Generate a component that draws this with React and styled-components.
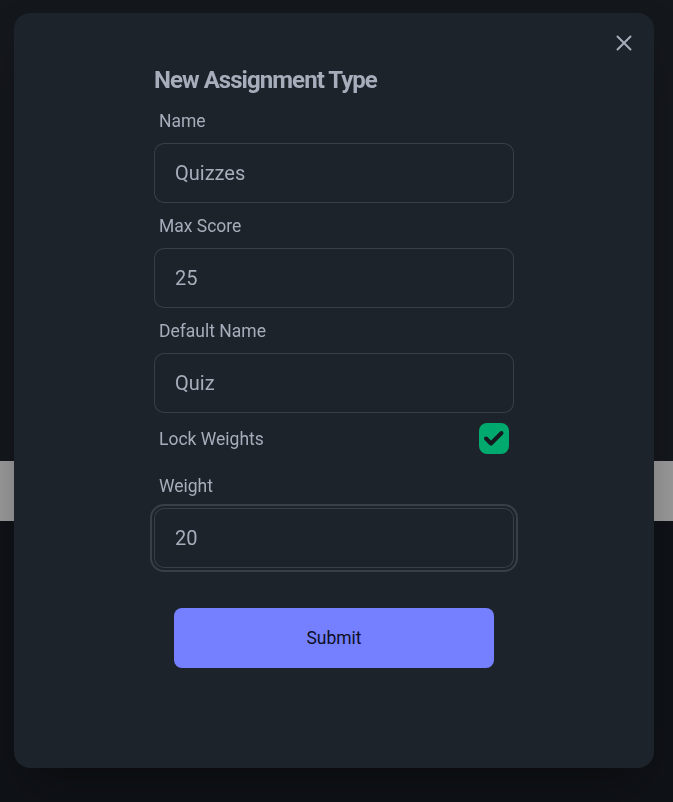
import React from "react";
import styled, { createGlobalStyle } from "styled-components";

const Global = createGlobalStyle`
  html, body { margin: 0; padding: 0; background: #0f1217; }
  body { font-family: Roboto, "Liberation Sans", sans-serif; }
  * { box-sizing: border-box; }
`;

const Page = styled.div`
  min-height: 100vh;
  display: flex;
  flex-direction: column;
`;

const Band = styled.div`
  height: ${(p) => p.$h}px;
  flex: ${(p) => (p.$grow ? 1 : "none")};
  background: ${(p) => p.$bg};
`;

const Overlay = styled.div`
  position: fixed;
  inset: 0;
  display: flex;
  justify-content: flex-start;
  align-items: flex-start;
  padding: 13px 0 0 14px;
`;

const Modal = styled.div`
  position: relative;
  width: 640px;
  height: 755px;
  background: #1d232a;
  border-radius: 16px;
  box-shadow: 0 25px 50px -12px rgba(0, 0, 0, 0.35);
  display: flex;
  justify-content: center;
  padding-top: 51px;
`;

const CloseButton = styled.button`
  position: absolute;
  top: 16px;
  right: 16px;
  width: 28px;
  height: 28px;
  border: none;
  background: transparent;
  padding: 0;
  display: flex;
  align-items: center;
  justify-content: center;
  cursor: pointer;
`;

const Form = styled.form`
  width: 360px;
  display: flex;
  flex-direction: column;
`;

const Title = styled.h3`
  margin: 0 0 2px;
  font-size: 24px;
  line-height: 32px;
  font-weight: 700;
  color: #a6adbb;
  letter-spacing: -0.95px;
`;

const Label = styled.label`
  display: block;
  padding: 11px 5px 10px;
  font-size: 17.5px;
  line-height: 24px;
  color: #a6adbb;
`;

const Input = styled.input`
  width: 100%;
  height: 60px;
  border: 1px solid rgba(166, 173, 187, 0.2);
  border-radius: 10px;
  background: #1d232a;
  color: #a6adbb;
  font-family: inherit;
  font-size: 20px;
  padding: 0 20px;
  outline: ${(p) => (p.$focused ? "2px solid rgba(166, 173, 187, 0.2)" : "none")};
  outline-offset: 2px;
  caret-color: #a6adbb;
`;

const ToggleRow = styled.label`
  height: 50px;
  padding: 0 5px;
  display: flex;
  align-items: center;
  justify-content: space-between;
  font-size: 17.5px;
  line-height: 24px;
  color: #a6adbb;
`;

const RowText = styled.span`
  margin-top: 2px;
`;

const Check = styled.span`
  width: 30px;
  height: 31px;
  border-radius: 8px;
  background: #00a96e;
  display: flex;
  align-items: center;
  justify-content: center;
`;

const SubmitButton = styled.button`
  align-self: center;
  margin-top: 40px;
  width: 320px;
  height: 60px;
  border: none;
  border-radius: 8px;
  background: #7480ff;
  color: #0d0f1f;
  font-family: inherit;
  font-size: 17.5px;
  font-weight: 400;
  cursor: pointer;
`;

function Field({ label, value, focused }) {
  return (
    <>
      <Label>{label}</Label>
      <Input defaultValue={value} $focused={focused} autoFocus={focused} />
    </>
  );
}

export default function App() {
  return (
    <>
      <Global />
      <Page>
        <Band $h={461} $bg="#14171c" />
        <Band $h={60} $bg="#9a9a9a" />
        <Band $grow $bg="#0f1217" />
      </Page>
      <Overlay>
        <Modal>
          <CloseButton type="button" aria-label="Close">
            <svg width="16" height="16" viewBox="0 0 16 16">
              <path d="M1.5 1.5 L14.5 14.5 M14.5 1.5 L1.5 14.5" stroke="#a6adbb" strokeWidth="2" strokeLinecap="round" />
            </svg>
          </CloseButton>
          <Form onSubmit={(e) => e.preventDefault()}>
            <Title>New Assignment Type</Title>
            <Field label="Name" value="Quizzes" />
            <Field label="Max Score" value="25" />
            <Field label="Default Name" value="Quiz" />
            <ToggleRow>
              <RowText>Lock Weights</RowText>
              <Check>
                <svg width="30" height="30" viewBox="0 0 30 30">
                  <path d="M7 15.5 L12 20.5 L22.5 10" fill="none" stroke="#15191f" strokeWidth="4" strokeLinecap="round" strokeLinejoin="round" />
                </svg>
              </Check>
            </ToggleRow>
            <Field label="Weight" value="20" focused />
            <SubmitButton type="submit">Submit</SubmitButton>
          </Form>
        </Modal>
      </Overlay>
    </>
  );
}
